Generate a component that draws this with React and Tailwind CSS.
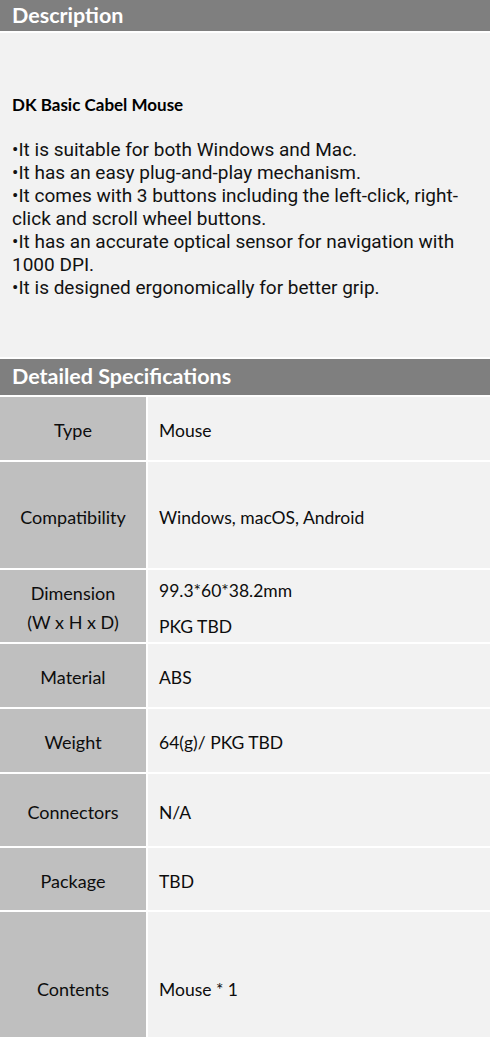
const specs = [
  { label: ["Type"], value: ["Mouse"], h: "h-[63px]" },
  { label: ["Compatibility"], value: ["Windows, macOS, Android"], h: "h-[106px]" },
  { label: ["Dimension", "(W x H x D)"], value: ["99.3*60*38.2mm", "PKG TBD"], h: "h-[72px]" },
  { label: ["Material"], value: ["ABS"], h: "h-[63px]" },
  { label: ["Weight"], value: ["64(g)/ PKG TBD"], h: "h-[63px]" },
  { label: ["Connectors"], value: ["N/A"], h: "h-[72px]" },
  { label: ["Package"], value: ["TBD"], h: "h-[62px]" },
  { label: ["Contents"], value: ["Mouse * 1"], h: "h-[150px]" },
];

const bullets = [
  "•It is suitable for both Windows and Mac.",
  "•It has an easy plug-and-play mechanism.",
  "•It comes with 3 buttons including the left-click, right-click and scroll wheel buttons.",
  "•It has an accurate optical sensor for navigation with 1000 DPI.",
  "•It is designed ergonomically for better grip.",
];

function SectionHeader({ children, h }) {
  return (
    <div className={`${h} bg-[#7f7f7f] flex items-center px-3`}>
      <h2 className="text-white font-bold text-[21.5px] leading-none font-['Lato',sans-serif]">
        {children}
      </h2>
    </div>
  );
}

export default function App() {
  return (
    <div className="w-[490px] bg-white flex flex-col gap-[2px] font-['Lato',sans-serif] text-[#0d0d0d]">
      <SectionHeader h="h-[31px]">Description</SectionHeader>

      {/* Description body */}
      <div className="h-[324px] bg-[#f2f2f2] pt-[61px] pl-[12px] pr-[24px]">
        <h3 className="font-bold text-[17px] leading-[22px] text-black">DK Basic Cabel Mouse</h3>
        <div className="mt-[22px] font-['Roboto',sans-serif] text-[19px] leading-[23px] text-[#111]">
          {bullets.map((b) => (
            <p key={b}>{b}</p>
          ))}
        </div>
      </div>

      <SectionHeader h="h-[36px]">Detailed Specifications</SectionHeader>

      {/* Spec table */}
      {specs.map((row) => (
        <div key={row.label[0]} className={`${row.h} flex gap-[2px]`}>
          <div className="w-[146px] shrink-0 bg-[#bfbfbf] flex flex-col items-center justify-center text-[18px] leading-[29px] pt-1">
            {row.label.map((l) => (
              <span key={l}>{l}</span>
            ))}
          </div>
          <div className="flex-1 bg-[#f2f2f2] flex flex-col justify-center gap-[7px] pl-[11px] text-[17.5px] leading-[29px] pt-1">
            {row.value.map((v) => (
              <span key={v}>{v}</span>
            ))}
          </div>
        </div>
      ))}
    </div>
  );
}
